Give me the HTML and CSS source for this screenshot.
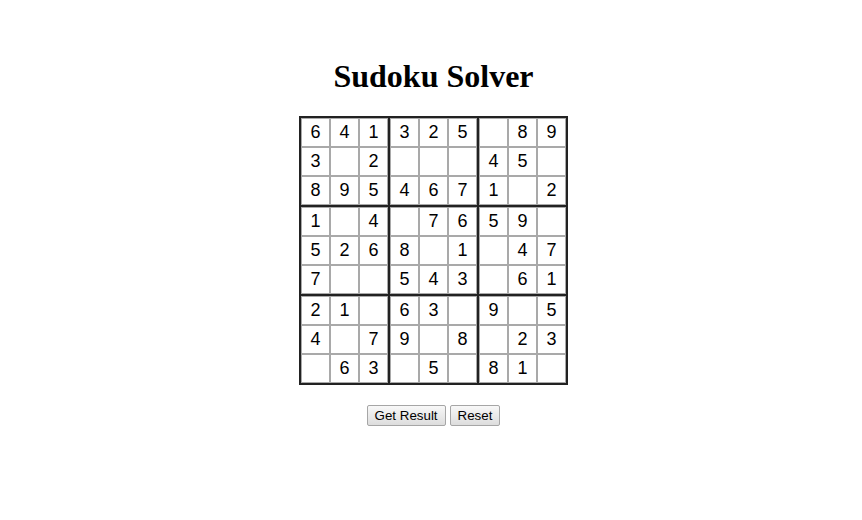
FILE: index.html
```html
<!DOCTYPE html>
<html lang="en">
<head>
<meta charset="utf-8">
<title>Sudoku Solver</title>
<link rel="stylesheet" href="styles.css">
</head>
<body>
<main class="page">
  <h1 class="title">Sudoku Solver</h1>
  <div class="board">
    <div class="box"><div class="cell">6</div><div class="cell">4</div><div class="cell">1</div><div class="cell">3</div><div class="cell"></div><div class="cell">2</div><div class="cell">8</div><div class="cell">9</div><div class="cell">5</div></div>
    <div class="box"><div class="cell">3</div><div class="cell">2</div><div class="cell">5</div><div class="cell"></div><div class="cell"></div><div class="cell"></div><div class="cell">4</div><div class="cell">6</div><div class="cell">7</div></div>
    <div class="box"><div class="cell"></div><div class="cell">8</div><div class="cell">9</div><div class="cell">4</div><div class="cell">5</div><div class="cell"></div><div class="cell">1</div><div class="cell"></div><div class="cell">2</div></div>
    <div class="box"><div class="cell">1</div><div class="cell"></div><div class="cell">4</div><div class="cell">5</div><div class="cell">2</div><div class="cell">6</div><div class="cell">7</div><div class="cell"></div><div class="cell"></div></div>
    <div class="box"><div class="cell"></div><div class="cell">7</div><div class="cell">6</div><div class="cell">8</div><div class="cell"></div><div class="cell">1</div><div class="cell">5</div><div class="cell">4</div><div class="cell">3</div></div>
    <div class="box"><div class="cell">5</div><div class="cell">9</div><div class="cell"></div><div class="cell"></div><div class="cell">4</div><div class="cell">7</div><div class="cell"></div><div class="cell">6</div><div class="cell">1</div></div>
    <div class="box"><div class="cell">2</div><div class="cell">1</div><div class="cell"></div><div class="cell">4</div><div class="cell"></div><div class="cell">7</div><div class="cell"></div><div class="cell">6</div><div class="cell">3</div></div>
    <div class="box"><div class="cell">6</div><div class="cell">3</div><div class="cell"></div><div class="cell">9</div><div class="cell"></div><div class="cell">8</div><div class="cell"></div><div class="cell">5</div><div class="cell"></div></div>
    <div class="box"><div class="cell">9</div><div class="cell"></div><div class="cell">5</div><div class="cell"></div><div class="cell">2</div><div class="cell">3</div><div class="cell">8</div><div class="cell">1</div><div class="cell"></div></div>
  </div>
  <div class="actions">
    <button class="btn" type="button">Get Result</button>
    <button class="btn" type="button">Reset</button>
  </div>
</main>
</body>
</html>
```
FILE: styles.css
```css
html, body {
  margin: 0;
  padding: 0;
  background: #ffffff;
}

.page {
  padding: 58px 0 0 5px;
  display: flex;
  flex-direction: column;
  align-items: center;
}

.title {
  margin: 0 0 21px;
  font-family: "Liberation Serif", "Times New Roman", serif;
  font-weight: bold;
  font-size: 32px;
  line-height: 37px;
  color: #000;
}

.board {
  display: grid;
  grid-template-columns: repeat(3, 87px);
  grid-template-rows: repeat(3, 87px);
  gap: 2px;
  background: #222222;
  border: 2px solid #222222;
}

.box {
  display: grid;
  grid-template-columns: repeat(3, 29px);
  grid-template-rows: repeat(3, 29px);
  background: #ffffff;
}

.cell {
  box-sizing: border-box;
  border: 1px solid #a9a9a9;
  background: #ffffff;
  font-family: "Liberation Sans", Arial, sans-serif;
  font-size: 18px;
  line-height: 27px;
  text-align: center;
  color: #000;
}

.actions {
  margin-top: 20px;
  display: flex;
  gap: 4px;
}

.btn {
  font-family: "Liberation Sans", Arial, sans-serif;
  font-size: 13.333px;
  line-height: 15px;
  padding: 2px 7px;
  color: #000;
  border: 1px solid #a6a6a6;
  border-radius: 2px;
  background: linear-gradient(#f8f8f8, #dddddd);
  margin: 0;
}
```
